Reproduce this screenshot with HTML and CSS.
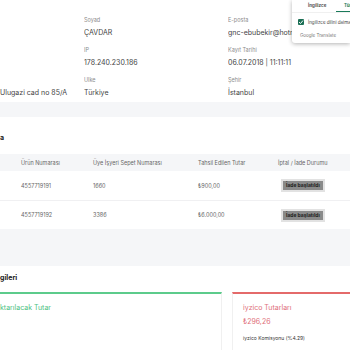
FILE: index.html
```html
<!DOCTYPE html>
<html lang="tr">
<head>
  <meta charset="UTF-8">
  <title>Sipariş Detayı</title>
  <link rel="stylesheet" href="styles.css">
</head>
<body>
  <div class="page">
    <section class="card customer">
      <div class="info-grid">
        <div class="field"><div class="label"></div><div class="value"></div></div>
        <div class="field"><div class="label">Soyad</div><div class="value">ÇAVDAR</div></div>
        <div class="field"><div class="label">E-posta</div><div class="value">gnc-ebubekir@hotmail.com</div></div>
        <div class="field"><div class="label"></div><div class="value"></div></div>
        <div class="field"><div class="label">IP</div><div class="value">178.240.230.186</div></div>
        <div class="field"><div class="label">Kayıt Tarihi</div><div class="value">06.07.2018 | 11:11:11</div></div>
        <div class="field"><div class="label"></div><div class="value">Ulugazi cad no 85/A</div></div>
        <div class="field"><div class="label">Ülke</div><div class="value">Türkiye</div></div>
        <div class="field"><div class="label">Şehir</div><div class="value">İstanbul</div></div>
      </div>
    </section>

    <section class="card products">
      <h2 class="card-title">a</h2>
      <div class="table">
        <div class="row head">
          <div></div>
          <div>Ürün Numarası</div>
          <div>Üye İşyeri Sepet Numarası</div>
          <div>Tahsil Edilen Tutar</div>
          <div>İptal / İade Durumu</div>
        </div>
        <div class="row">
          <div></div>
          <div>4557719191</div>
          <div>1660</div>
          <div>₺900,00</div>
          <div><span class="status-btn">İade başlatıldı</span></div>
        </div>
        <div class="row">
          <div></div>
          <div>4557719192</div>
          <div>3386</div>
          <div>₺6.000,00</div>
          <div><span class="status-btn">İade başlatıldı</span></div>
        </div>
      </div>
    </section>

    <section class="card payment">
      <h2 class="card-title">gileri</h2>
      <div class="amounts">
        <div class="amount-box green">
          <div class="amount-title">ktarılacak Tutar</div>
        </div>
        <div class="amount-box red">
          <div class="amount-title">iyzico Tutarları</div>
          <div class="amount-value">₺296,26</div>
          <div class="amount-note">iyzico Komisyonu (%4.29)</div>
        </div>
      </div>
    </section>
  </div>

  <div class="translate-popup">
    <div class="tabs">
      <span class="tab">İngilizce</span>
      <span class="tab active">Türkçe</span>
    </div>
    <div class="check-row">
      <span class="checkbox">
        <svg width="6" height="6" viewBox="0 0 6 6"><path d="M1 3.1 L2.5 4.5 L5 1.5" fill="none" stroke="#fff" stroke-width="1"/></svg>
      </span>
      <span class="check-text">İngilizce dilini daima çevir</span>
    </div>
    <div class="brand">Google Translate</div>
  </div>
</body>
</html>
```

FILE: styles.css
```css
body {
  margin: 0;
  background-color: #f5f6f8;
  font-family: Inter, "Noto Sans", sans-serif;
  color: #333;
  overflow: hidden;
}

.page {
  width: 350px;
}

.card {
  background-color: #fff;
}

.customer {
  padding: 16px 0 4px;
  margin-bottom: 15px;
}

.info-grid {
  display: grid;
  grid-template-columns: 84px 144px 64px;
  row-gap: 8px;
}

.field {
  white-space: nowrap;
  overflow: hidden;
}

.label {
  font-size: 5.5px;
  line-height: 8px;
  height: 8px;
  color: #8c8c8c;
  margin-bottom: 4px;
}

.value {
  font-size: 7px;
  line-height: 10px;
  height: 10px;
  color: #444;
}

.products {
  padding-top: 16px;
  margin-bottom: 37px;
}

.card-title {
  margin: 0;
  font-size: 7px;
  line-height: 10px;
  font-weight: 700;
  color: #222;
}

.table {
  margin-top: 11px;
}

.row {
  display: grid;
  grid-template-columns: 21px 72px 105px 80px 1fr;
  align-items: center;
  height: 29px;
  font-size: 5.5px;
  color: #666;
  border-bottom: 1px solid #f0f0f2;
  white-space: nowrap;
}

.row:last-child {
  border-bottom: none;
  height: 28px;
}

.row.head {
  height: 17px;
  background-color: #f5f6f8;
  color: #666;
  border-bottom: none;
}

.status-btn {
  display: inline-block;
  margin-left: 3px;
  padding: 0 3px;
  height: 9px;
  line-height: 9px;
  background-color: #8a8a8a;
  border: 2px solid #e2e2e2;
  color: #1e1e1e;
  font-weight: 700;
  font-size: 5px;
}

.payment {
  padding-top: 7px;
  height: 100px;
}

.amounts {
  display: grid;
  grid-template-columns: 222px 1fr;
  column-gap: 10px;
  margin-top: 9px;
}

.amount-box {
  border: 1px solid #f0f0f0;
  border-top: 2px solid;
  height: 70px;
  padding-top: 9px;
}

.amount-box.green {
  border-top-color: #5ccb8b;
  border-left: none;
}

.amount-box.red {
  border-top-color: #e46a6a;
  border-right: none;
  padding-left: 10px;
}

.amount-title {
  font-size: 7px;
  line-height: 10px;
  white-space: nowrap;
}

.green .amount-title {
  color: #4cbf7f;
}

.red .amount-title,
.amount-value {
  color: #e0707a;
}

.amount-value {
  font-size: 7px;
  line-height: 10px;
  margin-top: 4px;
}

.amount-note {
  font-size: 5px;
  line-height: 8px;
  color: #333;
  margin-top: 7px;
}

.translate-popup {
  position: absolute;
  top: 0;
  left: 292px;
  width: 58px;
  height: 43px;
  background-color: #fff;
  box-shadow: 0 1px 4px rgba(0, 0, 0, 0.3);
  border-bottom-left-radius: 3px;
  white-space: nowrap;
  overflow: hidden;
}

.tabs {
  display: flex;
  height: 12px;
  border-bottom: 1px solid #f0f0f0;
}

.tab {
  font-size: 4.5px;
  line-height: 11px;
  font-weight: 700;
  color: #555;
  width: 28px;
  padding-left: 16px;
  flex-shrink: 0;
}

.tab.active {
  color: #1a7a5a;
  border-bottom: 1px solid #1a7a5a;
  width: auto;
  padding-left: 8px;
}

.check-row {
  display: flex;
  align-items: center;
  gap: 4px;
  padding: 5px 0 0 6px;
  height: 8px;
}

.checkbox {
  display: flex;
  align-items: center;
  justify-content: center;
  width: 6px;
  height: 6px;
  background-color: #1b6f55;
  border-radius: 1px;
  flex-shrink: 0;
}

.check-text {
  font-size: 4.5px;
  color: #444;
}

.brand {
  font-size: 4.5px;
  line-height: 6px;
  color: #777;
  padding: 7px 0 0 8px;
}
```
